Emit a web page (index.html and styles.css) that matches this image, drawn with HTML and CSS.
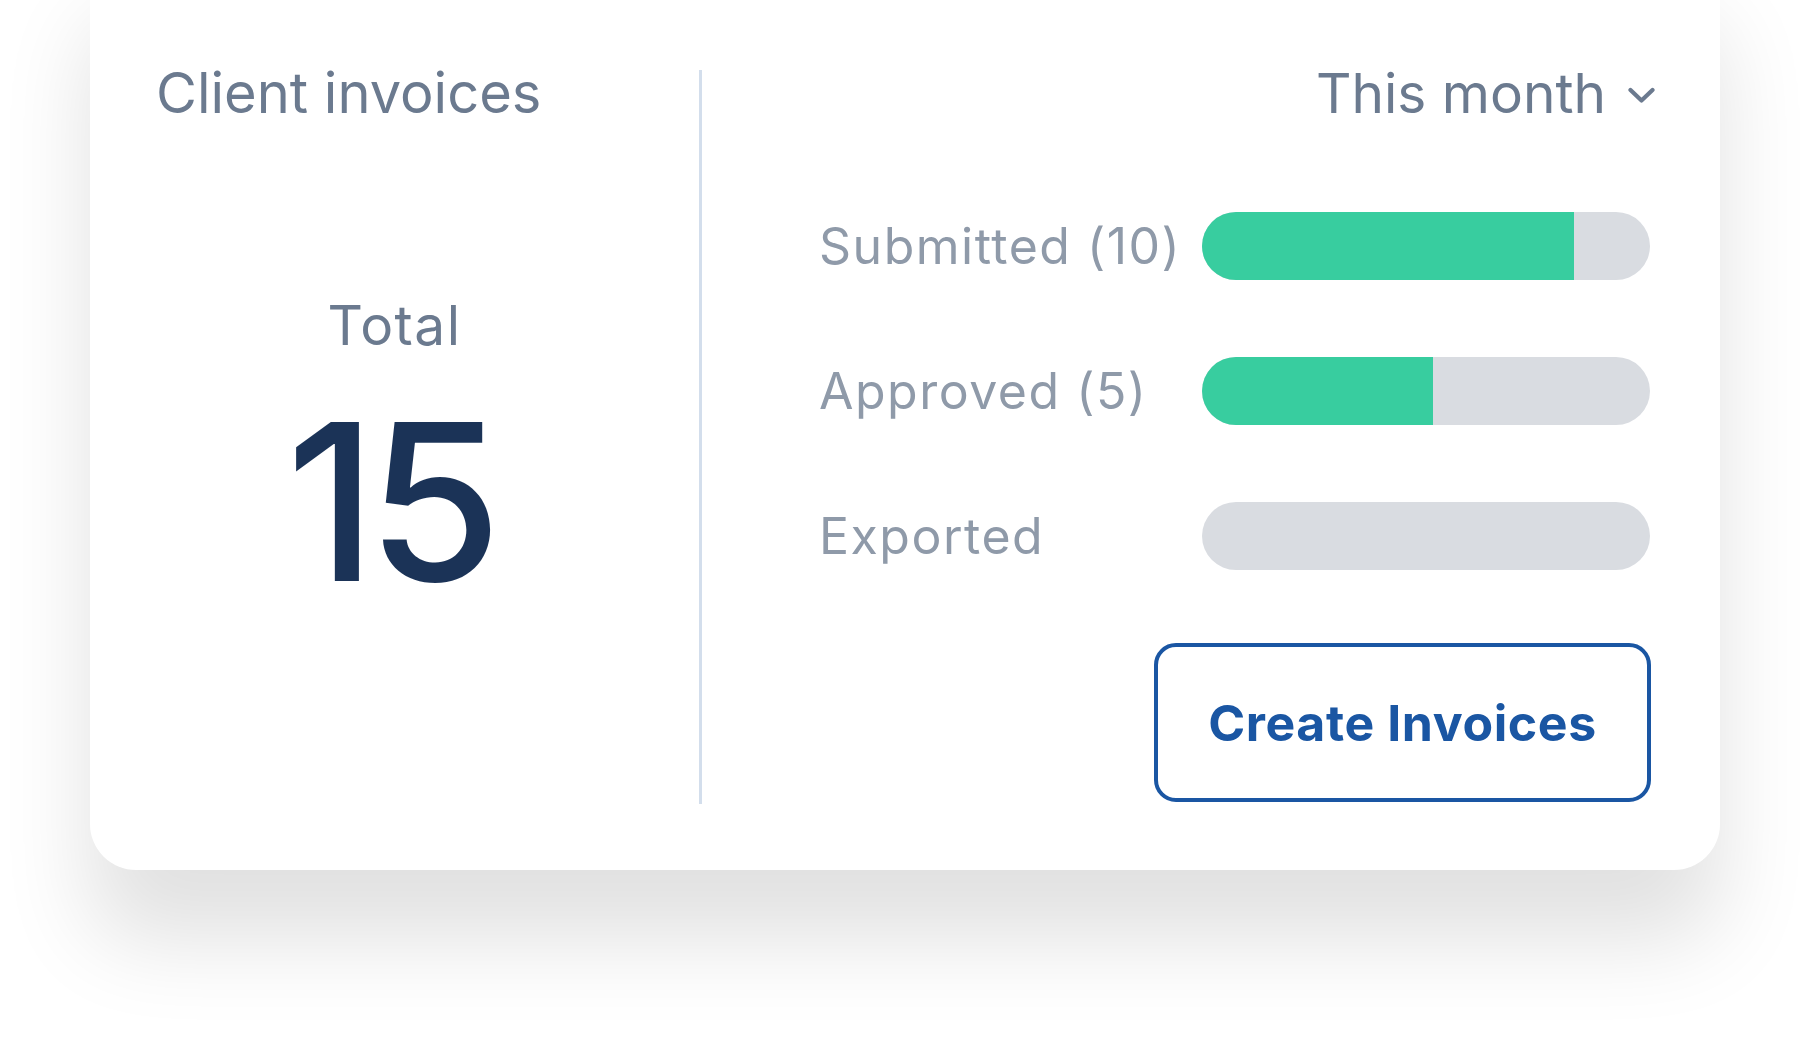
FILE: index.html
```html
<!DOCTYPE html>
<html lang="en">
<head>
<meta charset="utf-8">
<title>Client invoices</title>
<link rel="stylesheet" href="styles.css">
</head>
<body>
<div class="page">
  <section class="card">
    <div class="left">
      <h2 class="title">Client invoices</h2>
      <div class="total-label">Total</div>
      <div class="total-value">15</div>
    </div>
    <div class="divider"></div>
    <div class="right">
      <div class="period">
        <span class="period-text">This month</span>
        <svg class="chevron" width="27" height="17" viewBox="0 0 27 17" aria-hidden="true">
          <polyline points="2.5,3 13.5,13.5 24.5,3" fill="none" stroke="#6b7a8f" stroke-width="4.2" stroke-linecap="round" stroke-linejoin="round"/>
        </svg>
      </div>
      <div class="rows">
        <div class="row">
          <span class="label">Submitted (10)</span>
          <div class="bar"><div class="fill" style="width: 83%"></div></div>
        </div>
        <div class="row">
          <span class="label">Approved (5)</span>
          <div class="bar"><div class="fill" style="width: 51.5%"></div></div>
        </div>
        <div class="row">
          <span class="label">Exported</span>
          <div class="bar"></div>
        </div>
      </div>
      <div class="actions">
        <button class="btn" type="button">Create Invoices</button>
      </div>
    </div>
  </section>
</div>
</body>
</html>
```

FILE: styles.css
```css
html, body {
  margin: 0;
  padding: 0;
  background: #ffffff;
  overflow: hidden;
}

body {
  font-family: Inter, "Noto Sans", "Liberation Sans", sans-serif;
  width: 1809px;
  height: 1047px;
}

.page {
  padding-left: 90px;
}

.card {
  box-sizing: border-box;
  width: 1630px;
  height: 920px;
  margin-top: -50px;
  padding: 109px 0 64px 0;
  background: #ffffff;
  border-radius: 46px;
  box-shadow: 0 70px 90px rgba(0, 0, 0, 0.12);
  display: flex;
  align-items: stretch;
}

.left {
  width: 609px;
  box-sizing: border-box;
  padding-left: 66px;
  display: flex;
  flex-direction: column;
}

.title {
  margin: 0;
  font-size: 56px;
  line-height: 68px;
  font-weight: 400;
  color: #6b7a8f;
}

.total-label {
  margin-top: 164px;
  margin-left: -66px;
  text-align: center;
  font-size: 55px;
  line-height: 68px;
  font-weight: 400;
  color: #6b7a8f;
  letter-spacing: 1.5px;
}

.total-value {
  margin-top: 43px;
  margin-left: -66px;
  padding-right: 10px;
  text-align: center;
  font-size: 218px;
  line-height: 200px;
  font-weight: 500;
  color: #1b3357;
  letter-spacing: -9px;
}

.divider {
  width: 3px;
  margin-top: 11px;
  margin-bottom: 2px;
  background: #d3deec;
}

.right {
  flex: 1;
  box-sizing: border-box;
  padding: 0 69px 0 117px;
  display: flex;
  flex-direction: column;
}

.period {
  display: flex;
  justify-content: flex-end;
  align-items: center;
  height: 68px;
  margin-right: -4px;
}

.period-text {
  font-size: 55px;
  line-height: 68px;
  color: #6b7a8f;
  font-weight: 400;
}

.chevron {
  margin-left: 22px;
  margin-top: 4px;
}

.rows {
  margin-top: 85px;
  display: flex;
  flex-direction: column;
  gap: 77px;
}

.row {
  display: flex;
  align-items: center;
  height: 68px;
}

.label {
  width: 383px;
  font-size: 50px;
  color: #8f9aa9;
  font-weight: 400;
  letter-spacing: 1.5px;
  white-space: nowrap;
}

.bar {
  width: 448px;
  height: 68px;
  border-radius: 34px;
  background: #d9dce1;
  overflow: hidden;
}

.fill {
  height: 100%;
  background: #38cd9f;
}

.actions {
  margin-top: 73px;
  display: flex;
  justify-content: flex-end;
}

.btn {
  box-sizing: border-box;
  width: 497px;
  height: 159px;
  border: 4px solid #1a56a3;
  border-radius: 22px;
  background: #ffffff;
  color: #1a56a3;
  font-family: Inter, "Noto Sans", "Liberation Sans", sans-serif;
  font-size: 50px;
  font-weight: 700;
  letter-spacing: 0.6px;
  padding: 0;
  cursor: pointer;
}
```
